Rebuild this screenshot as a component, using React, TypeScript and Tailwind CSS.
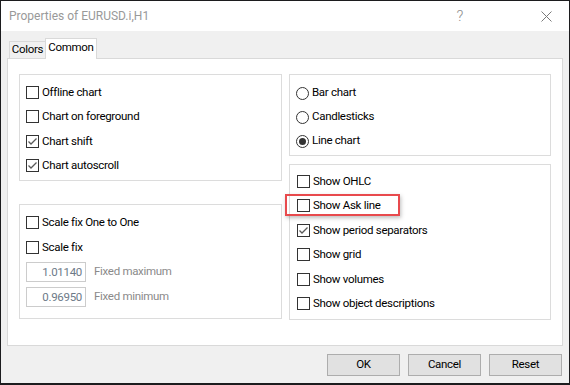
import React from "react";

type Item = { label: string; checked?: boolean };

function Check({ checked }: { checked?: boolean }) {
  return (
    <span className="w-[13px] h-[13px] border border-[#333333] bg-white flex items-center justify-center shrink-0">
      {checked && (
        <svg width="11" height="11" viewBox="0 0 11 11">
          <path d="M1.5 5.5 L4 8 L9.5 2.5" fill="none" stroke="#5a5a5a" strokeWidth="1.3" />
        </svg>
      )}
    </span>
  );
}

function Radio({ checked }: { checked?: boolean }) {
  return (
    <span className="w-[13px] h-[13px] rounded-full border border-[#333333] bg-white flex items-center justify-center shrink-0">
      {checked && <span className="w-[7px] h-[7px] rounded-full bg-[#333333]" />}
    </span>
  );
}

function CheckRow({ label, checked }: Item) {
  return (
    <div className="h-[24.5px] flex items-center gap-[3px]">
      <Check checked={checked} />
      <span>{label}</span>
    </div>
  );
}

function RadioRow({ label, checked }: Item) {
  return (
    <div className="h-6 flex items-center gap-[3px]">
      <Radio checked={checked} />
      <span>{label}</span>
    </div>
  );
}

function Field({ value, label }: { value: string; label: string }) {
  return (
    <div className="flex items-center gap-2">
      <div className="w-[60px] h-[20px] border border-[#cccccc] bg-white text-right pr-[3px] text-[#6d7a88] leading-[18px]">
        {value}
      </div>
      <span className="text-[#8a8a8a]">{label}</span>
    </div>
  );
}

const chartOpts: Item[] = [
  { label: "Offline chart" },
  { label: "Chart on foreground" },
  { label: "Chart shift", checked: true },
  { label: "Chart autoscroll", checked: true },
];

const chartTypes: Item[] = [
  { label: "Bar chart" },
  { label: "Candlesticks" },
  { label: "Line chart", checked: true },
];

const showOpts: Item[] = [
  { label: "Show OHLC" },
  { label: "Show Ask line" },
  { label: "Show period separators", checked: true },
  { label: "Show grid" },
  { label: "Show volumes" },
  { label: "Show object descriptions" },
];

export default function App() {
  return (
    <div className="relative w-[570px] h-[385px] bg-[#1c1c1e] pt-px px-px pb-[2px] flex font-['Roboto',sans-serif] text-[11.5px] tracking-[-0.3px] text-black">
      <div className="flex-1 flex flex-col bg-[#f0f0f0]">
        {/* title bar */}
        <div className="h-[30px] bg-white flex items-center pl-2 pr-[17px]">
          <span className="text-[#999999] text-[12px] tracking-normal">Properties of EURUSD.i,H1</span>
          <span className="ml-auto mr-[78px] text-[#8f8f8f] text-[15px] font-light">?</span>
          <svg width="11" height="11" viewBox="0 0 11 11">
            <path d="M0.5 0.5 L10.5 10.5 M10.5 0.5 L0.5 10.5" stroke="#7a7a7a" strokeWidth="1" />
          </svg>
        </div>

        {/* tabs */}
        <div className="mt-[7px] h-[21px] -mb-px flex items-end pl-2 relative z-10">
          <div className="w-[36px] h-[18px] border border-[#d9d9d9] border-r-0 bg-[#f0f0f0] flex items-center justify-center">
            Colors
          </div>
          <div className="w-[52px] h-[21px] border border-[#d9d9d9] border-b-0 bg-white flex items-center justify-center pb-[2px]">
            Common
          </div>
        </div>

        {/* panel */}
        <div className="mx-[6px] h-[288px] bg-white border border-[#d9d9d9] pt-[15px] px-[11px] flex gap-[7px]">
          <div className="w-[263px] flex flex-col gap-[23px]">
            <div className="h-[107px] border border-[#dcdcdc] pt-[5px] px-[6px]">
              {chartOpts.map((o) => (
                <CheckRow key={o.label} {...o} />
              ))}
            </div>
            <div className="h-[115px] border border-[#dcdcdc] pt-[5px] px-[6px]">
              <CheckRow label="Scale fix One to One" />
              <div className="mt-[1px]">
                <CheckRow label="Scale fix" />
              </div>
              <div className="mt-[2px] flex flex-col gap-[5px]">
                <Field value="1.01140" label="Fixed maximum" />
                <Field value="0.96950" label="Fixed minimum" />
              </div>
            </div>
          </div>
          <div className="w-[262px] flex flex-col gap-[8px]">
            <div className="h-[82px] border border-[#dcdcdc] pt-[6px] px-[6px]">
              {chartTypes.map((o) => (
                <RadioRow key={o.label} {...o} />
              ))}
            </div>
            <div className="h-[156px] border border-[#dcdcdc] pt-[4px] px-[7px]">
              {showOpts.map((o) => (
                <CheckRow key={o.label} {...o} />
              ))}
            </div>
          </div>
        </div>

        {/* buttons */}
        <div className="mt-[8px] pr-[7px] flex justify-end gap-[8px]">
          {["OK", "Cancel", "Reset"].map((b) => (
            <button
              key={b}
              className="w-[73px] h-[22px] bg-[#e1e1e1] border border-[#adadad] flex items-center justify-center"
            >
              {b}
            </button>
          ))}
        </div>
      </div>

      {/* highlight */}
      <div className="absolute left-[285px] top-[194px] w-[115px] h-[22px] border-2 border-[#e84a4d] shadow-[1px_2px_4px_rgba(0,0,0,0.25)]" />
    </div>
  );
}
